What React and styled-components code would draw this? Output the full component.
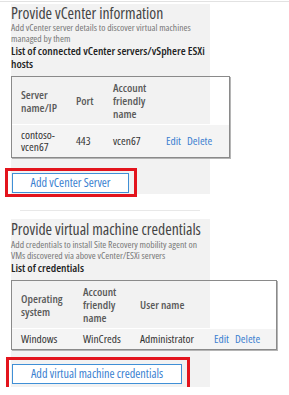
import React from 'react'
import styled, { createGlobalStyle } from 'styled-components'

const Global = createGlobalStyle`
body{
  margin:0;
  background:#fff;
  font-family:"Open Sans","Noto Sans",sans-serif;
  font-stretch:75%;
}
`;

const TopLine = styled.div`
height:1px;
margin-top:1px;
background:#e2e2e2;
`;

const Panel = styled.section`
margin-left:11px;
width:199px;
margin-top:${p => p.top}px;
background:#f2f2f2;
`;

const Title = styled.h2`
margin:0;
font-size:15.7px;
font-weight:400;
line-height:${p => p.lh || 18}px;
color:#444;
white-space:nowrap;
`;

const Sub = styled.p`
margin:0;
font-size:9.6px;
line-height:11px;
color:#777;
white-space:nowrap;
`;

const ListTitle = styled.h3`
margin:0;
font-size:11.4px;
font-weight:600;
line-height:13px;
color:#222;
white-space:nowrap;
`;

const Table = styled.div`
margin-top:6px;
width:${p => p.width}px;
box-sizing:border-box;
border:1px solid #8a8a8a;
box-shadow:1px 1px 0 #b5b5b5;
`;

const Row = styled.div`
display:grid;
grid-template-columns:${p => p.cols};
align-items:center;
padding:4px 0 4px 9px;
background:${p => (p.head ? 'transparent' : '#f4f4f4')};
border-top:${p => (p.head ? 'none' : '1px solid #fff')};
`;

const Head = styled.div`
font-size:11.4px;
font-weight:600;
line-height:13px;
color:#5a5a5a;
`;

const Cell = styled.div`
font-size:11.4px;
line-height:12px;
color:#333;
white-space:nowrap;
`;

const Links = styled.div`
display:flex;
gap:6px;
font-size:11.4px;
line-height:12px;
color:#3a7fd0;
`;

const Highlight = styled.div`
display:inline-block;
margin-left:${p => p.left}px;
margin-top:${p => p.top}px;
margin-bottom:-3px;
border:3px solid #e3141d;
padding:${p => p.pad};
`;

const Button = styled.button`
display:block;
width:${p => p.width}px;
height:20px;
box-sizing:border-box;
border:1px solid #3f8fd6;
background:#fff;
color:#3a7fd0;
font-family:inherit;
font-stretch:75%;
font-size:12.2px;
padding:0;
line-height:18px;
`;

const Divider = styled.hr`
margin:16px 0 0 20px;
width:180px;
border:0;
height:1px;
background:#e8e8e8;
`;

const App = () => {
  return (
    <>
      <Global />
      <TopLine />
      <Panel top={2}>
        <Title>Provide vCenter information</Title>
        <Sub>Add vCenter server details to discover virtual machines</Sub>
        <Sub>managed by them</Sub>
        <ListTitle>List of connected vCenter servers/vSphere ESXi<br />hosts</ListTitle>
        <Table width={219}>
          <Row head cols="55px 37px 53px 1fr">
            <Head>Server<br />name/IP</Head>
            <Head>Port</Head>
            <Head>Account<br />friendly<br />name</Head>
            <Head />
          </Row>
          <Row cols="55px 37px 53px 1fr">
            <Cell>contoso-<br />vcen67</Cell>
            <Cell>443</Cell>
            <Cell>vcen67</Cell>
            <Links><span>Edit</span><span>Delete</span></Links>
          </Row>
        </Table>
        <Highlight left={-6} top={10} pad="2px 5px 1px 4px">
          <Button width={117}>Add vCenter Server</Button>
        </Highlight>
      </Panel>
      <Divider />
      <Panel top={8}>
        <Title lh={20}>Provide virtual machine credentials</Title>
        <Sub>Add credentials to install Site Recovery mobility agent on</Sub>
        <Sub>VMs discovered via above vCenter/ESXi servers</Sub>
        <ListTitle>List of credentials</ListTitle>
        <Table width={266}>
          <Row head cols="62px 57px 74px 1fr">
            <Head>Operating<br />system</Head>
            <Head>Account<br />friendly<br />name</Head>
            <Head>User name</Head>
            <Head />
          </Row>
          <Row cols="62px 57px 74px 1fr">
            <Cell>Windows</Cell>
            <Cell>WinCreds</Cell>
            <Cell>Administrator</Cell>
            <Links><span>Edit</span><span>Delete</span></Links>
          </Row>
        </Table>
        <Highlight left={-5} top={7} pad="4px 5px 3px 3px">
          <Button width={170}>Add virtual machine credentials</Button>
        </Highlight>
      </Panel>
    </>
  )
}

export default App
